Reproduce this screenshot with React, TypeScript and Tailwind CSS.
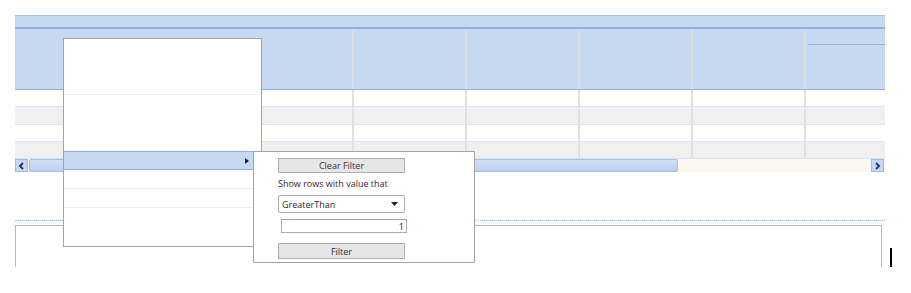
import React from "react";

function Cells() {
  return (
    <>
      <div className="w-[337px] shrink-0" />
      <div className="w-[113px] shrink-0 border-l-2 border-[#e0e0e0]" />
      <div className="w-[113px] shrink-0 border-l-2 border-[#e0e0e0]" />
      <div className="w-[113px] shrink-0 border-l-2 border-[#e0e0e0]" />
      <div className="w-[113px] shrink-0 border-l-2 border-[#e0e0e0]" />
      <div className="w-[81px] shrink-0 border-l-2 border-[#e0e0e0]" />
    </>
  );
}

function Chevron({ dir }: { dir: "left" | "right" }) {
  return (
    <svg width="7" height="8" viewBox="0 0 7 8">
      <path
        d={dir === "left" ? "M5 1 L2 4 L5 7" : "M2 1 L5 4 L2 7"}
        fill="none"
        stroke="#203f7c"
        strokeWidth="2"
      />
    </svg>
  );
}

export default function App() {
  return (
    <div className="relative w-[911px] h-[293px] bg-white overflow-hidden font-['Open_Sans',sans-serif] text-[9px]">
      {/* Grid */}
      <div className="pt-[15px] pl-[15px]">
        <div className="w-[870px]">
          {/* top band */}
          <div className="h-[14px] border-t border-[#aac3ea] bg-[#c6d9f0] border-b-2 border-b-[#93b0e0]" />
          {/* header row */}
          <div className="h-[61px] bg-[#c6d9f0] border-b border-[#93b0e0] flex">
            <div className="w-[337px] shrink-0" />
            <div className="w-[113px] shrink-0 mt-[1px] border-l-2 border-[#dedede]" />
            <div className="w-[113px] shrink-0 mt-[1px] border-l-2 border-[#dedede]" />
            <div className="w-[113px] shrink-0 mt-[1px] border-l-2 border-[#dedede]" />
            <div className="w-[113px] shrink-0 mt-[1px] border-l-2 border-[#dedede]" />
            <div className="w-[81px] shrink-0 mt-[1px] border-l-2 border-[#dedede]">
              <div className="ml-[2px] h-[15px] border-b border-[#93b0e0]" />
            </div>
          </div>
          {/* rows */}
          <div className="flex h-[17px] bg-[#fffffb] border-b border-[#d4e6f6]">
            <Cells />
          </div>
          <div className="flex h-[18px] bg-[#f0f0f0] border-b border-[#d4e6f6]">
            <Cells />
          </div>
          <div className="flex h-[17px] bg-[#fffffb] border-b border-[#d4e6f6]">
            <Cells />
          </div>
          <div className="flex h-[17px] bg-[#f0f0f0] border-b border-[#d4e6f6]">
            <Cells />
          </div>
          {/* scrollbar */}
          <div className="flex h-[13px] bg-[#fbf8f0]">
            <div className="w-[13px] h-[13px] shrink-0 border border-[#9db9e6] bg-[#c6d8f3] flex items-center justify-center">
              <Chevron dir="left" />
            </div>
            <div className="ml-[1px] w-[649px] h-full shrink-0 border border-[#a3bee8] rounded-[2px] bg-gradient-to-b from-[#d2e0f5] to-[#bccff0]" />
            <div className="flex-1" />
            <div className="w-[13px] h-[13px] shrink-0 mr-[1px] border border-[#9db9e6] bg-[#c6d8f3] flex items-center justify-center">
              <Chevron dir="right" />
            </div>
          </div>
          {/* dotted separator */}
          <div className="mt-[48px] border-t border-dotted border-[#7fc8e6]" />
          {/* lower box */}
          <div className="mt-[4px] w-[867px] h-[42px] border-l border-t border-r border-[#a9bbd2]" />
        </div>
      </div>

      {/* text caret */}
      <div className="absolute left-[890px] top-[248px] w-[2px] h-[19px] bg-black" />

      {/* Context menu */}
      <div className="absolute left-[63px] top-[38px] w-[199px] h-[209px] bg-white border border-[#a3a3a3] flex flex-col">
        <div className="h-[56px] border-b border-[#ececec] mr-[4px]" />
        <div className="h-[56px]" />
        <div className="h-[19px] bg-[#c6d9f0] border-t border-b border-[#8fb0e3] flex items-center justify-end pr-[12px]">
          <svg width="4" height="6" viewBox="0 0 4 6">
            <path d="M0 0 L4 3 L0 6 Z" fill="#222" />
          </svg>
        </div>
        <div className="h-[19px] border-b border-[#ececec]" />
        <div className="h-[19px] border-b border-[#ececec]" />
        <div className="flex-1" />
      </div>

      {/* Submenu */}
      <div className="absolute left-[253px] top-[151px] w-[222px] h-[112px] bg-white border border-[#a3a3a3] pl-[24px] pt-[6px] text-[#3a2136]">
        <div className="w-[127px] h-[15px] bg-[#e6e6e6] border border-[#adadad] flex items-center justify-center leading-none text-[#4a1f40]">
          Clear Filter
        </div>
        <div className="mt-[4px] h-[14px] leading-[14px]">Show rows with value that</div>
        <div className="mt-[4px] w-[127px] h-[18px] border border-[#abadb3] rounded-[2px] bg-white flex items-center justify-between pl-[3px] pr-[6px] text-[#2a2a2a]">
          <span className="leading-none">GreaterThan</span>
          <svg width="7" height="4" viewBox="0 0 7 4">
            <path d="M0 0 L7 0 L3.5 4 Z" fill="#222" />
          </svg>
        </div>
        <div className="mt-[6px] ml-[3px] w-[126px] h-[14px] border border-[#abadb3] border-t-[#8e9fb8] bg-white flex items-center justify-end pr-[2px] leading-none text-[#222]">
          1
        </div>
        <div className="mt-[10px] w-[127px] h-[16px] bg-[#e6e6e6] border border-[#adadad] flex items-center justify-center leading-none text-[#2a2a2a]">
          Filter
        </div>
      </div>
    </div>
  );
}
